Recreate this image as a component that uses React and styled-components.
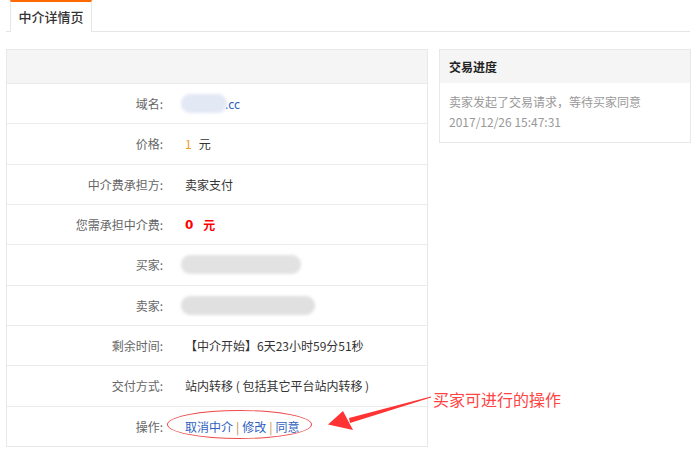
import React from "react";
import styled, { createGlobalStyle } from "styled-components";

const Global = createGlobalStyle`
  html, body { margin: 0; padding: 0; background: #fff; }
  body {
    font-family: "Microsoft YaHei", "Noto Sans CJK SC", "Noto Sans", sans-serif;
    font-size: 12px;
    color: #333;
  }
`;

const Page = styled.div`
  position: relative;
  width: 700px;
  height: 452px;
  overflow: hidden;
`;

const TabBar = styled.div`
  margin: 0 10px 0 6px;
  height: 31px;
  border-bottom: 1px solid #e6e6e6;
  display: flex;
  align-items: flex-end;
`;

const Tab = styled.div`
  margin-left: 4px;
  width: 82px;
  box-sizing: border-box;
  border-top: 2px solid #ff6a00;
  border-left: 1px solid #e6e6e6;
  border-right: 1px solid #e6e6e6;
  background: #fff;
  margin-bottom: -1px;
  height: 32px;
  display: flex;
  align-items: center;
  justify-content: center;
  font-size: 13px;
  font-weight: 500;
  color: #333;
  padding-bottom: 1px;
`;

const Content = styled.div`
  display: flex;
  align-items: flex-start;
  gap: 11px;
  margin: 17px 0 0 6px;
`;

const Table = styled.div`
  width: 422px;
  box-sizing: border-box;
  border: 1px solid #e8e8e8;
`;

const HeadBand = styled.div`
  height: 33px;
  background: #f5f5f5;
`;

const Row = styled.div`
  display: grid;
  grid-template-columns: 156px 1fr;
  column-gap: 22px;
  align-items: center;
  height: 40.33px;
  box-sizing: border-box;
  border-top: 1px solid #ebebeb;
`;

const Label = styled.div`
  text-align: right;
  color: #666;
`;

const Value = styled.div`
  display: flex;
  align-items: center;
  color: ${(p) => p.$color || "#333"};
  font-weight: ${(p) => (p.$bold ? 700 : 400)};
`;

const Blur = styled.span`
  display: inline-block;
  width: ${(p) => p.$w}px;
  height: 19px;
  border-radius: 9px;
  background: ${(p) => p.$bg};
  filter: blur(1.5px);
  margin-left: -4px;
`;

const Link = styled.span`
  color: #2f5fbf;
`;

const Num = styled.span`
  color: ${(p) => p.$color};
  margin-right: ${(p) => p.$gap}px;
  font-family: ${(p) => (p.$mono ? '"DejaVu Sans", sans-serif' : "inherit")};
`;

const Ops = styled.div`
  position: relative;
  display: flex;
  align-items: center;
  gap: 3px;
  &::before {
    content: "";
    position: absolute;
    left: -18px;
    top: -8px;
    width: 143px;
    height: 27px;
    border: 1px solid #ee4a4a;
    border-radius: 50%;
  }
`;

const Sep = styled.span`
  color: #c9853a;
`;

const Side = styled.div`
  width: 252px;
  box-sizing: border-box;
  border: 1px solid #e8e8e8;
`;

const SideHead = styled.div`
  height: 33px;
  background: #f5f5f5;
  display: flex;
  align-items: center;
  padding-left: 9px;
  font-weight: 700;
  font-size: 12px;
  color: #222;
`;

const SideBody = styled.div`
  padding: 9px 9px 10px;
  color: #999;
  line-height: 20px;
`;

const Annotation = styled.div`
  position: absolute;
  left: 433px;
  top: 387px;
  font-size: 16px;
  color: #f44;
  white-space: nowrap;
`;

const ArrowSvg = styled.svg`
  position: absolute;
  left: 0;
  top: 0;
  pointer-events: none;
`;

export default function App() {
  return (
    <Page>
      <Global />
      <TabBar>
        <Tab>中介详情页</Tab>
      </TabBar>
      <Content>
        <Table>
          <HeadBand />
          <Row>
            <Label>域名:</Label>
            <Value>
              <Blur $w={46} $bg="#e3e8f5" />
              <Link style={{ marginLeft: -2 }}>.cc</Link>
            </Value>
          </Row>
          <Row>
            <Label>价格:</Label>
            <Value>
              <Num $color="#f39a2c" $gap={7}>1</Num>元
            </Value>
          </Row>
          <Row>
            <Label>中介费承担方:</Label>
            <Value>卖家支付</Value>
          </Row>
          <Row>
            <Label>您需承担中介费:</Label>
            <Value $color="#f00" $bold>
              <Num $color="#f00" $gap={10} $mono>0</Num>元
            </Value>
          </Row>
          <Row>
            <Label>买家:</Label>
            <Value>
              <Blur $w={120} $bg="#e2e2e2" />
            </Value>
          </Row>
          <Row>
            <Label>卖家:</Label>
            <Value>
              <Blur $w={134} $bg="#e0e0e0" />
            </Value>
          </Row>
          <Row>
            <Label>剩余时间:</Label>
            <Value>【中介开始】6天23小时59分51秒</Value>
          </Row>
          <Row>
            <Label>交付方式:</Label>
            <Value>站内转移 ( 包括其它平台站内转移 )</Value>
          </Row>
          <Row>
            <Label>操作:</Label>
            <Value>
              <Ops>
                <Link>取消中介</Link>
                <Sep>|</Sep>
                <Link>修改</Link>
                <Sep>|</Sep>
                <Link>同意</Link>
              </Ops>
            </Value>
          </Row>
        </Table>
        <Side>
          <SideHead>交易进度</SideHead>
          <SideBody>
            卖家发起了交易请求，等待买家同意
            <br />
            2017/12/26 15:47:31
          </SideBody>
        </Side>
      </Content>
      <ArrowSvg width="700" height="452" viewBox="0 0 700 452">
        <path
          d="M431 396.5 L349 418 L350 423 L431 397.5 Z"
          fill="#f33"
        />
        <path d="M328 424.5 L343 411 L353 430 Z" fill="#f33" />
      </ArrowSvg>
      <Annotation>买家可进行的操作</Annotation>
    </Page>
  );
}
